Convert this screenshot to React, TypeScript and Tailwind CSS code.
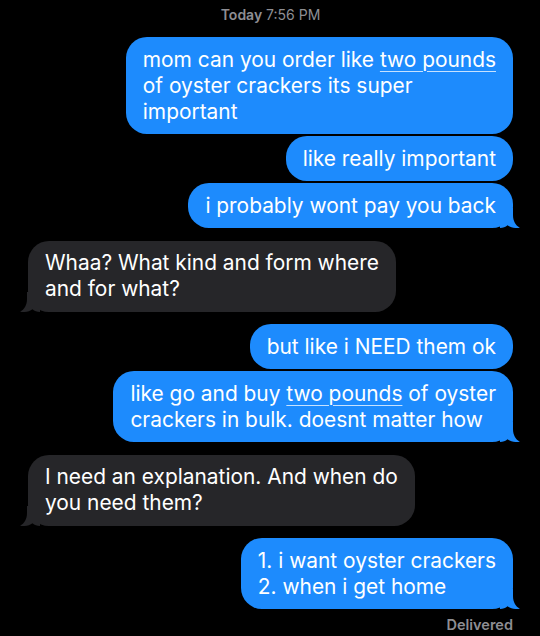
import React from "react";

type Msg = {
  from: "me" | "them";
  lines: React.ReactNode[];
};

const U = ({ children }: { children: React.ReactNode }) => (
  <span className="underline decoration-[1px] underline-offset-[4px] decoration-white/75">{children}</span>
);

const messages: Msg[] = [
  {
    from: "me",
    lines: [
      <>mom can you order like <U>two pounds</U></>,
      "of oyster crackers its super",
      "important",
    ],
  },
  { from: "me", lines: ["like really important"] },
  { from: "me", lines: ["i probably wont pay you back"] },
  { from: "them", lines: ["Whaa? What kind and form where", "and for what?"] },
  { from: "me", lines: ["but like i NEED them ok"] },
  {
    from: "me",
    lines: [
      <>like go and buy <U>two pounds</U> of oyster</>,
      "crackers in bulk. doesnt matter how",
    ],
  },
  { from: "them", lines: ["I need an explanation. And when do", "you need them?"] },
  { from: "me", lines: ["1. i want oyster crackers", "2. when i get home"] },
];

function Tail({ side, color }: { side: "left" | "right"; color: string }) {
  return (
    <svg
      width="20"
      height="20"
      viewBox="0 0 20 20"
      className={`absolute bottom-0 ${side === "right" ? "right-[-7px]" : "left-[-8px] -scale-x-100"}`}
    >
      <path
        d="M0 0 L13 0 L13 7 C13 13 15.5 17.5 20 19.8 C15 20.6 10.5 19.4 7.5 17.2 C5.5 19 3 20 0 20 Z"
        fill={color}
      />
    </svg>
  );
}

function Bubble({ msg, tail }: { msg: Msg; tail: boolean }) {
  const me = msg.from === "me";
  const color = me ? "#1d8bfd" : "#262629";
  return (
    <div className={`flex ${me ? "justify-end" : "justify-start"}`}>
      <div
        className={`relative rounded-[21px] px-[17px] py-[9.5px] text-[20.9px] leading-[26px] text-white whitespace-nowrap ${
          me ? "bg-[#1d8bfd]" : "bg-[#262629]"
        }`}
      >
        {msg.lines.map((l, i) => (
          <div key={i}>{l}</div>
        ))}
        {tail && <Tail side={me ? "right" : "left"} color={color} />}
      </div>
    </div>
  );
}

export default function App() {
  return (
    <div
      className="w-[540px] h-[636px] overflow-hidden bg-black pr-[27px] pl-[28px]"
      style={{ fontFamily: "Inter, 'Noto Sans', sans-serif" }}
    >
      <div className="pt-[7px] pb-[14px] text-center text-[14px] leading-[16px] text-[#8e8e93]">
        <span className="font-semibold">Today</span> 7:56 PM
      </div>
      <div className="flex flex-col">
        {messages.map((m, i) => {
          const next = messages[i + 1];
          const prev = messages[i - 1];
          const tail = !next || next.from !== m.from;
          const gap = !prev ? "" : prev.from === m.from ? "mt-[2px]" : "mt-[12.5px]";
          return (
            <div key={i} className={gap}>
              <Bubble msg={m} tail={tail} />
            </div>
          );
        })}
      </div>
      <div className="mt-[7px] text-right text-[14.5px] leading-[17px] font-semibold text-[#8e8e93]">
        Delivered
      </div>
    </div>
  );
}
